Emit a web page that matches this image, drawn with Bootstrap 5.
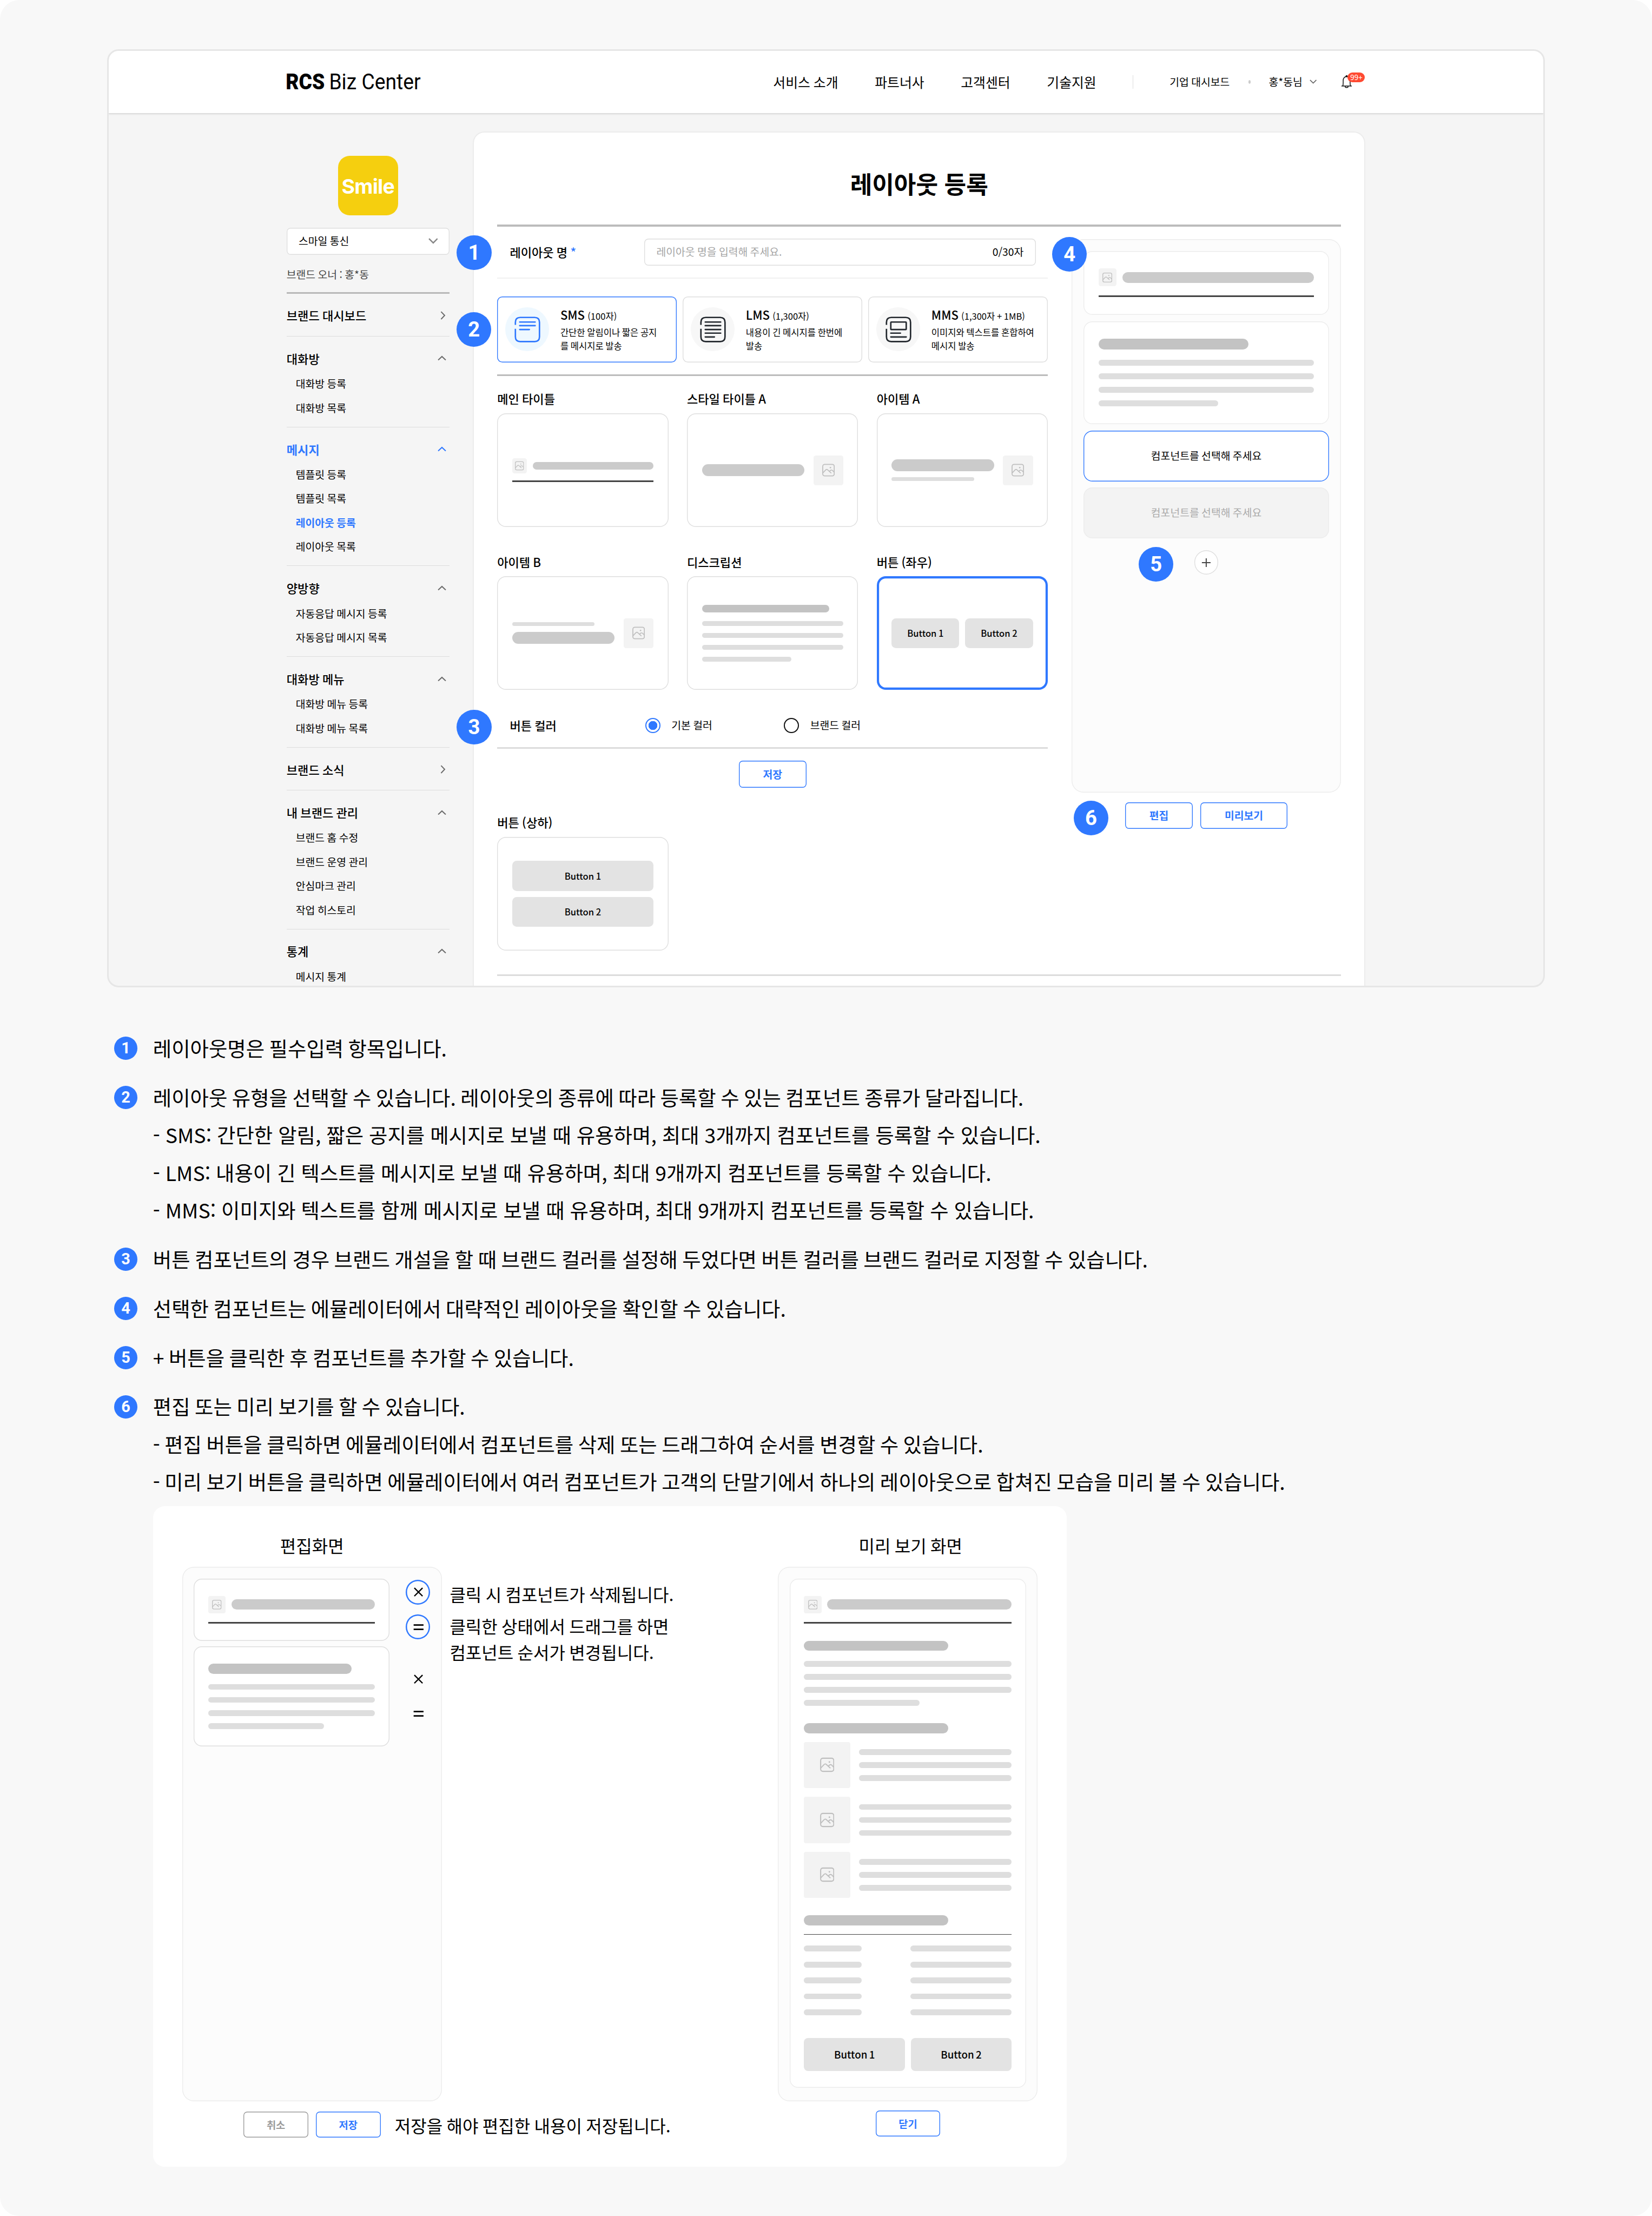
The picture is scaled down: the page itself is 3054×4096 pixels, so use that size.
<!DOCTYPE html>
<html lang="ko">
<head>
<meta charset="utf-8">
<meta name="viewport" content="width=device-width, initial-scale=1">
<title>RCS Biz Center - 레이아웃 등록</title>
<link rel="stylesheet" href="https://cdn.jsdelivr.net/npm/bootstrap@5.3.0/dist/css/bootstrap.min.css">
<script src="https://cdn.jsdelivr.net/npm/bootstrap@5.3.0/dist/js/bootstrap.bundle.min.js" defer></script>
<style>
:root{--k:.155rem;--blue:#2f78ff;--line:#dedede}
html{font-size:8.9064px;overflow:hidden;background:#fff}
body{width:342.9rem;height:459.9rem;overflow:hidden;background:#f8f8f8;border-radius:4rem;color:#000;font-family:"Noto Sans CJK KR","Noto Sans",sans-serif;font-size:2.17rem;line-height:1.5;word-spacing:-.05em}
a{color:inherit;text-decoration:none}
svg{display:block;flex:none;fill:none;stroke:currentColor}
.edge{box-shadow:inset 0 0 0 .155rem var(--edge,var(--line))}
.edge-blue{--edge:var(--blue)}
.edge-soft{--edge:#ececec}
.edge-line{--edge:#dedede}

/* site frame */
.site{width:298.5rem;height:194.7rem;margin:10.2rem 0 0 22.2rem;border:3px solid #e6e6e6;border-radius:2.4rem;background:#f5f5f5;overflow:hidden}
.site-head{height:12.9rem;padding-left:36.95rem;background:#fff;box-shadow:0 .15rem .4rem .1rem rgba(0,0,0,.16);position:relative;z-index:1}
.logo text{fill:#000;stroke:none;font-family:Roboto,sans-serif;font-size:45px;word-spacing:0}
.site-head .menu{margin-left:73.2rem;gap:7.6rem;font-size:2.79rem}
.site-head .bar{width:1px;height:2.8rem;background:#ddd;margin-left:7.6rem}
.dot{width:.55rem;height:.75rem;border-radius:50%;background:#ccc}
.alarm{position:relative;margin-left:5rem}
.alarm-count{position:absolute;left:1.4rem;top:-.45rem;width:3.6rem;height:2.05rem;border-radius:1.02rem;background:#ff4a32;color:#fff;font-size:1.5rem;line-height:1.95rem}
.site-body{padding-left:36.95rem}

/* side menu */
.side{width:33.8rem;padding-top:8.9rem;margin-right:4.9rem}
.brand-logo{width:12.4rem;height:12.4rem;border-radius:2.4rem;background:#f5cf0f;color:#fff;font:700 4.2rem/1 Inter,sans-serif;letter-spacing:-.08rem;padding-top:.3rem;margin-bottom:2.53rem}
.brand-select{height:5.58rem;border-radius:.8rem;background:#fff;padding:0 2.4rem 0 2.5rem}
.owner{height:8.1rem;padding-top:.4rem;color:#444;border-bottom:3px solid #b8b8b8}
.side-group{border-bottom:1px solid #dcdcdc;padding:1.68rem 0 1.42rem}
.side-title{height:5.68rem;font-size:2.48rem;font-weight:500;padding-right:.7rem}
.side-title svg{color:#6b6b6b}
.side-item{height:4.98rem;padding-left:1.9rem;display:flex;align-items:center}
.side .on,.side .on svg{color:var(--blue)}
.side .on{font-weight:700}

/* main panel */
.panel{width:185.2rem;height:182rem;margin-top:3.87rem;border:2px solid #ececec;border-radius:2.4rem 2.4rem 0 0;background:#fff;padding:0 4.8rem}
.panel h1{font-size:4.96rem;font-weight:700;line-height:6rem;margin:0;padding:7.65rem 0 5.4rem}
.rule-strong{height:.45rem;background:#bcbcbc}
.rule-mid{height:.32rem;background:#bcbcbc}
.rule-light{height:.32rem;background:#dcdcdc}
.work{width:114.3rem}
.name-row{padding:2.5rem 2.55rem 2.5rem 2.6rem;border-bottom:2px solid #f0f0f0;position:relative}
.name-row label{width:27.93rem;font-size:2.48rem;font-weight:500}
.name-box{height:5.56rem;border-radius:.9rem;padding:0 2.5rem}
.name-box .hint{color:#a5a5a5}
.pin{width:7.2rem;height:7.2rem;border-radius:50%;background:var(--blue);color:#fff;font:700 4.3rem/1 Roboto,sans-serif;display:flex;align-items:center;justify-content:center;position:absolute;z-index:2}
.pin-left{left:-8.4rem}
.kinds{--bs-gutter-x:1.23rem;margin-top:3.7rem;margin-bottom:2.5rem;position:relative}
.kind{height:13.67rem;border-radius:1.1rem;padding:0 1rem 0 1.7rem}
.kind-ico{width:9.05rem;height:9.05rem;border-radius:50%;background:#f7f7f7;color:#23282e;margin-right:2.35rem;flex:none}
.kind-ico.blue{background:#eef8ff;color:var(--blue)}
.kind-name{font-size:2.48rem;font-weight:500;line-height:3.8rem}
.kind-name span{font-size:1.86rem;font-weight:400}
.kind p{font-size:1.86rem;line-height:2.84rem;margin:0;white-space:nowrap}
.parts{--bs-gutter-x:3.84rem}
.part-name{font-size:2.48rem;font-weight:500;line-height:3.72rem;margin-bottom:1.19rem}
.part{height:23.6rem;border-radius:1.86rem;padding:0 calc(var(--k)*20)}
.part.picked{box-shadow:inset 0 0 0 .465rem var(--blue)}
.mt-parts{margin-top:5.31rem}

/* skeleton pieces */
.ph{border-radius:calc(var(--k)*3);background:#f3f3f3;color:#bfbfbf;display:flex;align-items:center;justify-content:center;flex:none}
.ph20{width:calc(var(--k)*20);height:calc(var(--k)*20)}
.ph24{width:calc(var(--k)*24);height:calc(var(--k)*24)}
.ph40{width:calc(var(--k)*40);height:calc(var(--k)*40)}
.ph64{width:calc(var(--k)*64);height:calc(var(--k)*64)}
.ph20 svg{width:60%}.ph24 svg{width:55%}.ph40 svg{width:42%}.ph64 svg{width:31%}
.sk{border-radius:2rem;background:#cbcbcb}
.sk-5{height:calc(var(--k)*5);background:#dedede}
.sk-6{height:calc(var(--k)*6.2);background:#dedede}
.sk-8{height:calc(var(--k)*8);background:#dedede}
.sk-10{height:calc(var(--k)*10)}
.sk-14{height:calc(var(--k)*14);background:#c3c3c3}
.sk-15{height:calc(var(--k)*14.5)}
.sk-16{height:calc(var(--k)*16)}
.gap-k8{gap:calc(var(--k)*8)}
.gap-k10{gap:calc(var(--k)*10)}
.gap-k12{gap:calc(var(--k)*12)}
.stroke{height:calc(var(--k)*2);background:#444}
.w-56{width:80.5%}.w-63{width:63.5%}.w-69{width:69.5%}.w-90{width:90%}
.fake-btn{height:calc(var(--k)*40);border-radius:calc(var(--k)*6);background:#e3e3e3;font-size:calc(var(--k)*12);font-weight:500;display:flex;align-items:center;justify-content:center}

.color-row{margin-top:4.2rem;height:7.7rem;padding:0 0 1.4rem 2.6rem;position:relative}
.color-row .cap{width:28.1rem;font-size:2.48rem;font-weight:500}
.pick{width:28.8rem;gap:2.3rem}
.form-check-input.rd{width:3.15rem;height:3.15rem;margin:0;border:2px solid #111;float:none}
.form-check-input.rd:checked{border-color:var(--blue);background:radial-gradient(circle closest-side,var(--blue) 67%,#fff 71%)}
.act{--bs-btn-color:var(--blue);--bs-btn-border-color:var(--blue);--bs-btn-bg:#fff;height:5.58rem;width:14rem;padding:0;border:0;border-radius:.8rem;font-size:2.17rem;font-weight:700;line-height:5.4rem;box-shadow:inset 0 0 0 .155rem var(--blue)}
.act-gray{--bs-btn-color:#9b9b9b;box-shadow:inset 0 0 0 .155rem #9b9b9b}

/* emulator */
.emu-col{width:55.95rem;margin-top:2.55rem;position:relative}
.emu{border-radius:2.48rem;background:#fcfcfc;padding:calc(var(--k)*16)}
.emu-main{height:114.95rem;gap:1.29rem}
.unit{border-radius:calc(var(--k)*12);background:#fff;padding:calc(var(--k)*23.7) calc(var(--k)*20) calc(var(--k)*24.3)}
.lines{display:flex;flex-direction:column;gap:calc(var(--k)*10)}
.slot{height:10.54rem;border-radius:1.86rem;background:#fff}
.slot-off{background:#f3f3f3;color:#aaa}
.plus{width:5rem;height:5rem;border-radius:50%;background:#fff;color:#444}

/* notes */
.guide{margin:8.75rem 0 0 23.7rem;font-size:4.2rem;line-height:7.8rem;word-spacing:-.23rem}
.guide li{display:flex;margin-bottom:2.4rem}
.guide .kinds-note{word-spacing:-.06rem}
.num{width:4.8rem;height:4.8rem;margin:1.5rem 3.25rem 0 0;border-radius:50%;background:var(--blue);color:#fff;font:700 3.25rem/4.85rem Roboto,sans-serif;text-align:center;flex:none}
.demo{--k:.15rem;width:189.6rem;height:137.1rem;margin:1.1rem 0 0 31.8rem;border-radius:2.4rem;background:#fff;padding:5.45rem 6rem 0;font-size:3.6rem;line-height:5.38rem;word-spacing:-.19rem}
.demo h2{font-size:3.6rem;font-weight:400;line-height:5.4rem;margin:0 0 1.8rem}
.demo .emu{width:53.9rem;height:110.95rem;border-radius:2.4rem}
.demo .act{width:13.45rem;height:5.4rem;font-size:2.1rem}
.demo .unit{border-radius:1.7rem;padding:calc(var(--k)*24) calc(var(--k)*20)}
.demo .emu-edit .unit{width:40.85rem}
.tool{width:5.1rem;height:5.1rem;border-radius:50%;display:flex;align-items:center;justify-content:center}
.tool.ring{box-shadow:inset 0 0 0 .28rem var(--blue)}
.tip{margin:3rem 0 0 1.65rem}
.demo-foot{margin-top:1.85rem}
</style>
</head>
<body>
<svg width="0" height="0" class="position-absolute">
  <symbol id="pic" viewBox="0 0 26 26"><rect x="1.1" y="1.1" width="23.8" height="23.8" rx="4" stroke-width="2"/><path d="M1.4 18.8 7.2 12.6C8.7 11 10 11 11.5 12.5L18.8 19.2M14.6 16.2C17.4 12 20 11.9 22 14.3L24.6 17.2" stroke-width="1.9"/><circle cx="17" cy="7.8" r="1.5" fill="currentColor" stroke="none"/></symbol>
  <symbol id="up" viewBox="0 0 18 11"><path d="M1.2 9.6 9 2.2l7.8 7.4" stroke-width="2.2"/></symbol>
  <symbol id="next" viewBox="0 0 11 18"><path d="M1.6 1.2 9 9l-7.4 7.8" stroke-width="2.2"/></symbol>
</svg>

<div class="site">
  <header class="site-head d-flex align-items-center">
    <svg class="logo overflow-visible" viewBox="0 0 278 46" style="width:27.8rem;height:4.6rem"><text x="-2" y="38" font-weight="900" textLength="81" lengthAdjust="spacingAndGlyphs">RCS</text><text x="88" y="38" textLength="190" lengthAdjust="spacingAndGlyphs">Biz Center</text></svg>
    <nav class="menu d-flex"><a href="#">서비스 소개</a><a href="#">파트너사</a><a href="#">고객센터</a><a href="#">기술지원</a></nav>
    <span class="bar"></span>
    <a href="#" style="margin-left:7.5rem">기업 대시보드</a>
    <span class="dot" style="margin:0 3.7rem 0 3.85rem"></span>
    <a href="#">홍*동님</a>
    <svg viewBox="0 0 15 9" style="width:1.5rem;margin-left:1.5rem" color="#666"><path d="M1 1l6.500 6.500L14 1" stroke-width="1.800"/></svg>
    <span class="alarm"><svg viewBox="0 0 24 30" style="width:2.4rem" color="#111"><path d="M1 23.500h21.500M3.600 23.500c1-1.500 1-3 1-6V12c0-4.500 3-8 7.200-8s7.200 3.500 7.200 8v5.500c0 3 0 4.500 1 6M8.500 24.500c.6 3 5.900 3 6.500 0" stroke-width="1.700"/><circle cx="11.800" cy="3.200" r="2.200" fill="#111" stroke="none"/></svg><span class="alarm-count text-center">99+</span></span>
  </header>

  <div class="site-body d-flex">
    <aside class="side">
      <div class="brand-logo d-flex align-items-center justify-content-center mx-auto">Smile</div>
      <div class="brand-select edge d-flex align-items-center justify-content-between"><span>스마일 통신</span><svg viewBox="0 0 20 12" style="width:2rem" color="#888"><path d="M1.200 1.200 10 10l8.800-8.800" stroke-width="2.800"/></svg></div>
      <div class="owner d-flex align-items-center">브랜드 오너 : 홍*동</div>
      <div class="side-group"><div class="side-title d-flex align-items-center justify-content-between">브랜드 대시보드<svg style="width:1.1rem;height:1.8rem;margin-right:.1rem"><use href="#next"/></svg></div></div>
      <div class="side-group"><div class="side-title d-flex align-items-center justify-content-between">대화방<svg style="width:1.8rem;height:1.1rem"><use href="#up"/></svg></div>
        <a class="side-item" href="#">대화방 등록</a><a class="side-item" href="#">대화방 목록</a></div>
      <div class="side-group"><div class="side-title on d-flex align-items-center justify-content-between">메시지<svg style="width:1.8rem;height:1.1rem"><use href="#up"/></svg></div>
        <a class="side-item" href="#">템플릿 등록</a><a class="side-item" href="#">템플릿 목록</a><a class="side-item on" href="#">레이아웃 등록</a><a class="side-item" href="#">레이아웃 목록</a></div>
      <div class="side-group"><div class="side-title d-flex align-items-center justify-content-between">양방향<svg style="width:1.8rem;height:1.1rem"><use href="#up"/></svg></div>
        <a class="side-item" href="#">자동응답 메시지 등록</a><a class="side-item" href="#">자동응답 메시지 목록</a></div>
      <div class="side-group"><div class="side-title d-flex align-items-center justify-content-between">대화방 메뉴<svg style="width:1.8rem;height:1.1rem"><use href="#up"/></svg></div>
        <a class="side-item" href="#">대화방 메뉴 등록</a><a class="side-item" href="#">대화방 메뉴 목록</a></div>
      <div class="side-group"><div class="side-title d-flex align-items-center justify-content-between">브랜드 소식<svg style="width:1.1rem;height:1.8rem;margin-right:.1rem"><use href="#next"/></svg></div></div>
      <div class="side-group"><div class="side-title d-flex align-items-center justify-content-between">내 브랜드 관리<svg style="width:1.8rem;height:1.1rem"><use href="#up"/></svg></div>
        <a class="side-item" href="#">브랜드 홈 수정</a><a class="side-item" href="#">브랜드 운영 관리</a><a class="side-item" href="#">안심마크 관리</a><a class="side-item" href="#">작업 히스토리</a></div>
      <div class="side-group border-0"><div class="side-title d-flex align-items-center justify-content-between">통계<svg style="width:1.8rem;height:1.1rem"><use href="#up"/></svg></div>
        <a class="side-item" href="#">메시지 통계</a></div>
    </aside>

    <main class="panel">
      <h1 class="text-center">레이아웃 등록</h1>
      <div class="rule-strong"></div>
      <div class="d-flex justify-content-between">
        <section class="work">
          <div class="name-row d-flex align-items-center">
            <span class="pin pin-left" style="top:1.85rem">1</span>
            <label>레이아웃 명 <span style="color:var(--blue)">*</span></label>
            <div class="name-box edge flex-grow-1 d-flex align-items-center justify-content-between"><span class="hint">레이아웃 명을 입력해 주세요.</span><span>0/30자</span></div>
          </div>
          <div class="row kinds">
            <span class="pin pin-left p-0" style="top:3.3rem;left:-7.8rem">2</span>
            <div class="col-4"><div class="kind edge edge-blue d-flex align-items-center">
              <span class="kind-ico blue d-flex align-items-center justify-content-center"><svg viewBox="0 0 54 54" style="width:5.4rem" stroke-width="3"><path d="M2 17.500V12C2 5 5 2 12 2h30c7 0 10 3 10 10v30c0 7-3 10-10 10H12C5 52 2 49 2 42V25.500"/><path stroke-linecap="round" d="M11 11.500h32M11 19h32M11 27h20"/></svg></span>
              <div><div class="kind-name">SMS <span>(100자)</span></div><p>간단한 알림이나 짧은 공지<br>를 메시지로 발송</p></div></div></div>
            <div class="col-4"><div class="kind edge d-flex align-items-center">
              <span class="kind-ico d-flex align-items-center justify-content-center"><svg viewBox="0 0 54 54" style="width:5.4rem" stroke-width="3"><path d="M2 17.500V12C2 5 5 2 12 2h30c7 0 10 3 10 10v30c0 7-3 10-10 10H12C5 52 2 49 2 42V25.500"/><path stroke-linecap="round" d="M11 11.500h32M11 19h32M11 27h32M11 34.500h32M11 42.500h19"/></svg></span>
              <div><div class="kind-name">LMS <span>(1,300자)</span></div><p>내용이 긴 메시지를 한번에<br>발송</p></div></div></div>
            <div class="col-4"><div class="kind edge d-flex align-items-center">
              <span class="kind-ico d-flex align-items-center justify-content-center"><svg viewBox="0 0 54 54" style="width:5.4rem" stroke-width="3"><path d="M2 17.500V12C2 5 5 2 12 2h30c7 0 10 3 10 10v30c0 7-3 10-10 10H12C5 52 2 49 2 42V25.500"/><rect x="11" y="11.500" width="32" height="15.500" rx="1"/><path stroke-linecap="round" d="M11 34.500h20M11 42.500h32"/></svg></span>
              <div><div class="kind-name">MMS <span>(1,300자 + 1MB)</span></div><p>이미지와 텍스트를 혼합하여<br>메시지 발송</p></div></div></div>
          </div>
          <div class="rule-mid"></div>

          <div class="row parts" style="margin-top:2.88rem">
            <div class="col-4"><div class="part-name">메인 타이틀</div>
              <div class="part edge d-flex flex-column justify-content-center gap-k10">
                <div class="d-flex align-items-center gap-k8"><span class="ph ph20"><svg><use href="#pic"/></svg></span><span class="sk sk-10 flex-grow-1"></span></div>
                <div class="stroke"></div></div></div>
            <div class="col-4"><div class="part-name">스타일 타이틀 A</div>
              <div class="part edge d-flex align-items-center gap-k12"><span class="sk sk-16 flex-grow-1"></span><span class="ph ph40"><svg><use href="#pic"/></svg></span></div></div>
            <div class="col-4"><div class="part-name">아이템 A</div>
              <div class="part edge d-flex align-items-center gap-k12"><div class="flex-grow-1 d-flex flex-column gap-k8"><span class="sk sk-16"></span><span class="sk sk-5 w-56"></span></div><span class="ph ph40"><svg><use href="#pic"/></svg></span></div></div>
          </div>
          <div class="row parts mt-parts">
            <div class="col-4"><div class="part-name">아이템 B</div>
              <div class="part edge d-flex align-items-center gap-k12"><div class="flex-grow-1 d-flex flex-column gap-k8"><span class="sk sk-5 w-56"></span><span class="sk sk-16"></span></div><span class="ph ph40"><svg><use href="#pic"/></svg></span></div></div>
            <div class="col-4"><div class="part-name">디스크립션</div>
              <div class="part edge d-flex flex-column justify-content-center"><span class="sk sk-10 w-90" style="background:#c3c3c3;margin-bottom:1.86rem"></span>
                <div class="d-flex flex-column" style="gap:1.52rem"><span class="sk sk-6"></span><span class="sk sk-6"></span><span class="sk sk-6"></span><span class="sk sk-6 w-63"></span></div></div></div>
            <div class="col-4"><div class="part-name">버튼 (좌우)</div>
              <div class="part picked d-flex align-items-center gap-k8"><span class="fake-btn w-50">Button 1</span><span class="fake-btn w-50">Button 2</span></div></div>
          </div>

          <div class="color-row d-flex align-items-center">
            <span class="pin pin-left" style="top:-.1rem">3</span>
            <span class="cap">버튼 컬러</span>
            <label class="pick d-flex align-items-center"><input class="form-check-input rd" type="radio" name="color" checked>기본 컬러</label>
            <label class="pick d-flex align-items-center"><input class="form-check-input rd" type="radio" name="color">브랜드 컬러</label>
          </div>
          <div class="rule-light"></div>
          <div class="text-center" style="margin-top:2.47rem;height:5.6rem"><button class="btn act d-block mx-auto">저장</button></div>

          <div class="row parts" style="margin-top:5.3rem">
            <div class="col-4"><div class="part-name">버튼 (상하)</div>
              <div class="part edge d-flex flex-column justify-content-center gap-k8"><span class="fake-btn">Button 1</span><span class="fake-btn">Button 2</span></div></div>
          </div>
        </section>

        <section class="emu-col">
          <span class="pin" style="left:-4rem;top:-.4rem">4</span>
          <div class="emu emu-main edge edge-soft d-flex flex-column">
            <div class="unit edge edge-soft">
              <div class="d-flex align-items-center gap-k8"><span class="ph ph24"><svg><use href="#pic"/></svg></span><span class="sk sk-15 flex-grow-1"></span></div>
              <div class="stroke" style="margin-top:1.86rem"></div>
            </div>
            <div class="unit edge edge-soft">
              <div class="sk sk-14 w-69" style="margin-bottom:2.17rem"></div>
              <div class="lines"><span class="sk sk-8"></span><span class="sk sk-8"></span><span class="sk sk-8"></span><span class="sk sk-8" style="width:55.5%"></span></div>
            </div>
            <div class="slot edge edge-blue d-flex align-items-center justify-content-center">컴포넌트를 선택해 주세요</div>
            <div class="slot slot-off edge edge-soft d-flex align-items-center justify-content-center">컴포넌트를 선택해 주세요</div>
            <div class="plus edge edge-line mx-auto d-flex align-items-center justify-content-center" style="margin-top:1.25rem"><svg viewBox="0 0 20 20" style="width:2rem"><path d="M10 1v18M1 10h18" stroke-width="2.200"/></svg></div>
          </div>
          <span class="pin" style="left:13.95rem;top:63.9rem">5</span>
          <div class="d-flex justify-content-center" style="gap:1.6rem;margin-top:1.95rem"><button class="btn act">편집</button><button class="btn act" style="width:18.05rem">미리보기</button></div>
          <span class="pin" style="left:.45rem;top:116.6rem">6</span>
        </section>
      </div>
      <div class="rule-light" style="margin-top:4.97rem"></div>
    </main>
  </div>
</div>

<ol class="guide list-unstyled mb-0">
  <li><span class="num">1</span><div>레이아웃명은 필수입력 항목입니다.</div></li>
  <li><span class="num">2</span><div>레이아웃 유형을 선택할 수 있습니다. 레이아웃의 종류에 따라 등록할 수 있는 컴포넌트 종류가 달라집니다.<div class="kinds-note">- SMS: 간단한 알림, 짧은 공지를 메시지로 보낼 때 유용하며, 최대 3개까지 컴포넌트를 등록할 수 있습니다.<br>- LMS: 내용이 긴 텍스트를 메시지로 보낼 때 유용하며, 최대 9개까지 컴포넌트를 등록할 수 있습니다.<br>- MMS: 이미지와 텍스트를 함께 메시지로 보낼 때 유용하며, 최대 9개까지 컴포넌트를 등록할 수 있습니다.</div></div></li>
  <li><span class="num">3</span><div>버튼 컴포넌트의 경우 브랜드 개설을 할 때 브랜드 컬러를 설정해 두었다면 버튼 컬러를 브랜드 컬러로 지정할 수 있습니다.</div></li>
  <li><span class="num">4</span><div>선택한 컴포넌트는 에뮬레이터에서 대략적인 레이아웃을 확인할 수 있습니다.</div></li>
  <li><span class="num">5</span><div>+ 버튼을 클릭한 후 컴포넌트를 추가할 수 있습니다.</div></li>
  <li class="mb-0"><span class="num">6</span><div>편집 또는 미리 보기를 할 수 있습니다.<br>- 편집 버튼을 클릭하면 에뮬레이터에서 컴포넌트를 삭제 또는 드래그하여 순서를 변경할 수 있습니다.<br>- 미리 보기 버튼을 클릭하면 에뮬레이터에서 여러 컴포넌트가 고객의 단말기에서 하나의 레이아웃으로 합쳐진 모습을 미리 볼 수 있습니다.</div></li>
</ol>

<div class="demo d-flex justify-content-between">
  <section>
    <h2 class="text-center" style="width:53.9rem">편집화면</h2>
    <div class="d-flex">
      <div class="emu emu-edit edge edge-soft d-flex flex-column gap-k8">
        <div class="d-flex align-items-center" style="gap:3.4rem">
          <div class="unit edge edge-line">
            <div class="d-flex align-items-center gap-k8"><span class="ph ph24"><svg><use href="#pic"/></svg></span><span class="sk sk-15 flex-grow-1"></span></div>
            <div class="stroke" style="margin-top:1.8rem"></div>
          </div>
          <div class="d-flex flex-column" style="gap:2.1rem">
            <span class="tool ring"><svg viewBox="0 0 24 24" style="width:2.4rem"><path d="M4.500 3.500l17 17M21.500 3.500l-17 17" stroke-width="2.600"/></svg></span>
            <span class="tool ring"><svg viewBox="0 0 24 24" style="width:2.4rem"><path d="M3 7.500h20.500M3 16.500h20.500" stroke-width="3"/></svg></span>
          </div>
        </div>
        <div class="d-flex align-items-center" style="gap:3.4rem">
          <div class="unit edge edge-line">
            <div class="sk sk-14" style="width:86.2%;margin-bottom:2.1rem"></div>
            <div class="lines"><span class="sk sk-8"></span><span class="sk sk-8"></span><span class="sk sk-8"></span><span class="sk sk-8 w-69"></span></div>
          </div>
          <div class="d-flex flex-column" style="gap:2.1rem">
            <span class="tool"><svg viewBox="0 0 24 24" style="width:2.4rem"><path d="M4.500 3.500l17 17M21.500 3.500l-17 17" stroke-width="2.600"/></svg></span>
            <span class="tool"><svg viewBox="0 0 24 24" style="width:2.4rem"><path d="M3 7.500h20.500M3 16.500h20.500" stroke-width="3"/></svg></span>
          </div>
        </div>
      </div>
      <div class="tip">클릭 시 컴포넌트가 삭제됩니다.<div style="margin-top:1.2rem">클릭한 상태에서 드래그를 하면<br>컴포넌트 순서가 변경됩니다.</div></div>
    </div>
    <div class="demo-foot d-flex align-items-center" style="padding-left:12.75rem;gap:1.55rem"><button class="btn act act-gray">취소</button><button class="btn act">저장</button><span style="margin-left:1.4rem;padding-top:.4rem">저장을 해야 편집한 내용이 저장됩니다.</span></div>
  </section>

  <section>
    <h2 class="text-center" style="padding-left:1.1rem">미리 보기 화면</h2>
    <div class="emu edge edge-soft">
      <div class="unit edge edge-soft" style="height:105.7rem">
        <div class="d-flex align-items-center gap-k8"><span class="ph ph24"><svg><use href="#pic"/></svg></span><span class="sk sk-15 flex-grow-1"></span></div>
        <div class="stroke" style="margin-top:1.8rem"></div>
        <div class="sk sk-14 w-69" style="margin:3.6rem 0 2.1rem"></div>
        <div class="lines"><span class="sk sk-8"></span><span class="sk sk-8"></span><span class="sk sk-8"></span><span class="sk sk-8" style="width:55.5%"></span></div>
        <div class="sk sk-14 w-69" style="margin:3.6rem 0 1.8rem"></div>
        <div class="d-flex flex-column" style="gap:1.8rem">
          <div class="d-flex align-items-center" style="gap:1.8rem"><span class="ph ph64"><svg><use href="#pic"/></svg></span><div class="lines flex-grow-1"><span class="sk sk-8"></span><span class="sk sk-8"></span><span class="sk sk-8"></span></div></div>
          <div class="d-flex align-items-center" style="gap:1.8rem"><span class="ph ph64"><svg><use href="#pic"/></svg></span><div class="lines flex-grow-1"><span class="sk sk-8"></span><span class="sk sk-8"></span><span class="sk sk-8"></span></div></div>
          <div class="d-flex align-items-center" style="gap:1.8rem"><span class="ph ph64"><svg><use href="#pic"/></svg></span><div class="lines flex-grow-1"><span class="sk sk-8"></span><span class="sk sk-8"></span><span class="sk sk-8"></span></div></div>
        </div>
        <div class="sk sk-14 w-69" style="margin:3.6rem 0 1.8rem"></div>
        <div class="stroke" style="height:1px"></div>
        <div class="d-flex justify-content-between" style="margin-top:2.3rem">
          <div class="d-flex flex-column" style="width:12rem;gap:2.1rem"><span class="sk sk-8"></span><span class="sk sk-8"></span><span class="sk sk-8"></span><span class="sk sk-8"></span><span class="sk sk-8"></span></div>
          <div class="d-flex flex-column" style="width:21rem;gap:2.1rem"><span class="sk sk-8"></span><span class="sk sk-8"></span><span class="sk sk-8"></span><span class="sk sk-8"></span><span class="sk sk-8"></span></div>
        </div>
        <div class="d-flex gap-k8" style="margin-top:4.7rem"><span class="fake-btn w-50" style="height:6.9rem;font-size:2.1rem">Button 1</span><span class="fake-btn w-50" style="height:6.9rem;font-size:2.1rem">Button 2</span></div>
      </div>
    </div>
    <div class="demo-foot"><button class="btn act d-block mx-auto">닫기</button></div>
  </section>
</div>
</body>
</html>
